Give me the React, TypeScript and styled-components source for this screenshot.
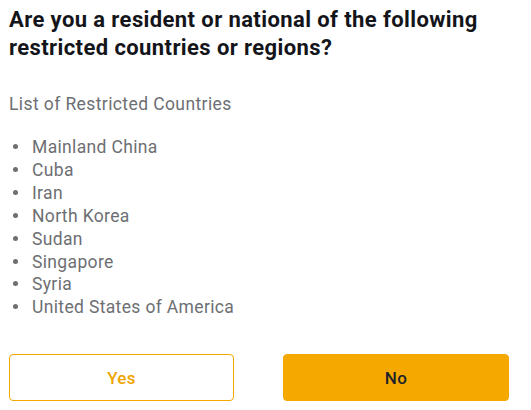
import React from "react";
import styled, { createGlobalStyle } from "styled-components";

const GlobalStyle = createGlobalStyle`
  html, body {
    margin: 0;
    padding: 0;
    background: #ffffff;
  }
  body {
    font-family: Roboto, "Liberation Sans", sans-serif;
  }
`;

const countries = [
  "Mainland China",
  "Cuba",
  "Iran",
  "North Korea",
  "Sudan",
  "Singapore",
  "Syria",
  "United States of America",
];

//layout
const Panel = styled.div`
  width: 500px;
  padding: 6px 0 0 9px;
  display: flex;
  flex-direction: column;
`;

//Text
const Title = styled.h1`
  margin: 0;
  color: #14151a;
  font-size: 22px;
  font-weight: 700;
  line-height: 28px;
  letter-spacing: 0.4px;
`;

const Subtitle = styled.p`
  margin: 32px 0 0 0;
  color: #6d6f73;
  font-size: 17.5px;
  line-height: 20px;
  letter-spacing: 0.4px;
`;

const CountryList = styled.ul`
  margin: 22px 0 0 0;
  padding: 0;
  list-style: none;
`;

const CountryItem = styled.li`
  position: relative;
  padding-left: 23px;
  color: #6d6f73;
  font-size: 17.5px;
  line-height: 22.9px;
  letter-spacing: 0.35px;

  &::before {
    content: "";
    position: absolute;
    left: 4px;
    top: 8px;
    width: 5px;
    height: 5px;
    border-radius: 50%;
    background: #6d6f73;
  }
`;

//buttons
const Actions = styled.div`
  margin-top: 35px;
  display: grid;
  grid-template-columns: 225px 226px;
  column-gap: 49px;
`;

const ChoiceButton = styled.button<{ $primary?: boolean }>`
  height: 47px;
  border-radius: 4px;
  border: 1px solid #f5a800;
  background: ${(p) => (p.$primary ? "#f5a800" : "#ffffff")};
  color: ${(p) => (p.$primary ? "#1e2329" : "#f0a400")};
  font-family: Roboto, "Liberation Sans", sans-serif;
  font-size: 17px;
  font-weight: 500;
  letter-spacing: 0.3px;
  cursor: pointer;
`;

const App: React.FC = () => {
  return (
    <>
      <GlobalStyle />
      <Panel>
        <Title>
          Are you a resident or national of the following restricted countries
          or regions?
        </Title>
        <Subtitle>List of Restricted Countries</Subtitle>
        <CountryList>
          {countries.map((name) => (
            <CountryItem key={name}>{name}</CountryItem>
          ))}
        </CountryList>
        <Actions>
          <ChoiceButton>Yes</ChoiceButton>
          <ChoiceButton $primary>No</ChoiceButton>
        </Actions>
      </Panel>
    </>
  );
};

export default App;
